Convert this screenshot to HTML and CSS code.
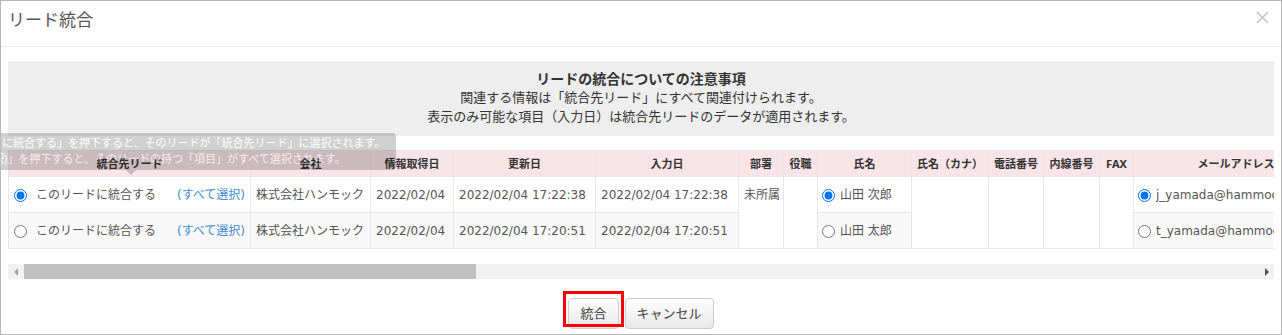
FILE: index.html
```html
<!DOCTYPE html>
<html lang="ja">
<head>
  <meta charset="UTF-8">
  <title>リード統合</title>
  <link rel="stylesheet" href="styles.css">
</head>
<body>

<div class="modal">
  <div class="modal-header">
    <div class="modal-title">リード統合</div>
    <button class="close-btn" aria-label="閉じる">
      <svg width="13" height="13" viewBox="0 0 13 13"><path d="M1 1 L12 12 M12 1 L1 12" stroke="#c4c4c4" stroke-width="1.6" fill="none"/></svg>
    </button>
  </div>

  <div class="modal-body">
    <div class="notice">
      <div class="notice-title">リードの統合についての注意事項</div>
      <div>関連する情報は「統合先リード」にすべて関連付けられます。</div>
      <div>表示のみ可能な項目（入力日）は統合先リードのデータが適用されます。</div>
    </div>

    <div class="table-scroll">
      <table class="merge-table">
        <colgroup>
          <col class="w-lead"><col class="w-company"><col class="w-date"><col class="w-datetime"><col class="w-datetime2">
          <col class="w-dept"><col class="w-post"><col class="w-name"><col class="w-kana"><col class="w-tel">
          <col class="w-ext"><col class="w-fax"><col class="w-mail">
        </colgroup>
        <thead>
          <tr>
            <th>統合先リード</th>
            <th>会社</th>
            <th>情報取得日</th>
            <th>更新日</th>
            <th>入力日</th>
            <th>部署</th>
            <th>役職</th>
            <th>氏名</th>
            <th>氏名（カナ）</th>
            <th>電話番号</th>
            <th>内線番号</th>
            <th>FAX</th>
            <th>メールアドレス</th>
          </tr>
        </thead>
        <tbody>
          <tr>
            <td><label class="lead-pick"><span class="pick"><input type="radio" name="lead" checked>このリードに統合する</span><a class="select-all">(すべて選択)</a></label></td>
            <td>株式会社ハンモック</td>
            <td>2022/02/04</td>
            <td>2022/02/04 17:22:38</td>
            <td>2022/02/04 17:22:38</td>
            <td class="merged" rowspan="2">未所属</td>
            <td class="merged" rowspan="2"></td>
            <td><label class="field-pick"><input type="radio" name="name" checked>山田 次郎</label></td>
            <td class="merged" rowspan="2"></td>
            <td class="merged" rowspan="2"></td>
            <td class="merged" rowspan="2"></td>
            <td class="merged" rowspan="2"></td>
            <td><label class="field-pick"><input type="radio" name="mail" checked>j_yamada@hammock.jp</label></td>
          </tr>
          <tr class="alt">
            <td><label class="lead-pick"><span class="pick"><input type="radio" name="lead">このリードに統合する</span><a class="select-all">(すべて選択)</a></label></td>
            <td>株式会社ハンモック</td>
            <td>2022/02/04</td>
            <td>2022/02/04 17:20:51</td>
            <td>2022/02/04 17:20:51</td>
            <td><label class="field-pick"><input type="radio" name="name">山田 太郎</label></td>
            <td><label class="field-pick"><input type="radio" name="mail">t_yamada@hammock.jp</label></td>
          </tr>
        </tbody>
      </table>
    </div>

    <div class="hscroll">
      <div class="hscroll-btn"><span class="arrow-left"></span></div>
      <div class="hscroll-track"><div class="hscroll-thumb"></div></div>
      <div class="hscroll-btn"><span class="arrow-right"></span></div>
    </div>
  </div>

  <div class="modal-footer">
    <span class="marked">
      <button class="btn">統合</button>
      <span class="mark-box"></span>
    </span>
    <button class="btn">キャンセル</button>
  </div>

  <div class="tooltip">
    <div class="tooltip-inner">
      <div>「このリードに統合する」を押下すると、そのリードが「統合先リード」に選択されます。</div>
      <div>「(すべて選択)」を押下すると、そのリードの持つ「項目」がすべて選択されます。</div>
    </div>
    <div class="tooltip-arrow"></div>
  </div>
</div>

</body>
</html>
```

FILE: styles.css
```css
html, body {
  margin: 0;
  padding: 0;
  background: #ffffff;
  color: #555555;
  font-family: "Noto Sans", "Noto Sans CJK JP", sans-serif;
}
.modal {
  position: relative;
  box-sizing: border-box;
  height: 335px;
  border: 1px solid #b8b8b8;
  overflow: hidden;
}

/* ヘッダー */
.modal-header {
  display: flex;
  justify-content: space-between;
  align-items: flex-start;
  padding: 9px 8px 16px 7px;
  border-bottom: 1px solid #ebebeb;
}
.modal-title {
  font-size: 17px;
  line-height: 20px;
  color: #555;
}
.close-btn {
  background: none;
  border: none;
  padding: 0;
  margin: 1px 4px 0 0;
  width: 13px;
  height: 13px;
  cursor: pointer;
}
.close-btn svg { display: block; }

/* 本文 */
.modal-body { padding: 14px 7px 0; }
.notice {
  background: #eeeeee;
  text-align: center;
  font-size: 13px;
  line-height: 19px;
  color: #333;
  padding: 8px 0 10px;
}
.notice-title { font-weight: bold; font-size: 14px; }

.table-scroll {
  margin-top: 14px;
  overflow: hidden;
}
.merge-table {
  table-layout: fixed;
  border-collapse: collapse;
  width: 1330px;
  font-family: "DejaVu Sans", "Noto Sans CJK JP", sans-serif;
  font-size: 12px;
}
.w-lead { width: 242px; }
.w-company { width: 120px; }
.w-date { width: 83px; }
.w-datetime { width: 142px; }
.w-datetime2 { width: 143px; }
.w-dept { width: 45px; }
.w-post { width: 34px; }
.w-name { width: 94px; }
.w-kana { width: 77px; }
.w-tel { width: 55px; }
.w-ext { width: 56px; }
.w-fax { width: 34px; }
.w-mail { width: 205px; }

.merge-table th {
  background: #f9e5e8;
  color: #333;
  font-family: "Noto Sans", "Noto Sans CJK JP", sans-serif;
  font-size: 11px;
  font-weight: bold;
  line-height: 17px;
  padding: 4px 2px;
  border: 1px solid #e6e6e6;
  white-space: nowrap;
  overflow: hidden;
}
.merge-table td {
  border: 1px solid #e6e6e6;
  padding: 8px 5px 7px 5px;
  line-height: 20px;
  vertical-align: top;
  white-space: nowrap;
  overflow: hidden;
  background: #ffffff;
}
.merge-table tr.alt td { background: #f9f9f9; }
.merge-table tr.alt td.merged,
.merge-table td.merged { background: #ffffff; }

.lead-pick {
  display: flex;
  justify-content: space-between;
  align-items: center;
}
.pick { display: flex; align-items: center; }
.lead-pick input { margin: 0 9px 0 0; }
.select-all { color: #3f8cd2; cursor: pointer; }
.field-pick { display: flex; align-items: center; }
.field-pick input { margin: 0 5px 0 -1px; }

/* 横スクロール */
.hscroll {
  display: flex;
  height: 15px;
  margin-top: 15px;
  background: #f1f1f1;
}
.hscroll-btn {
  width: 15px;
  display: flex;
  align-items: center;
  justify-content: center;
}
.arrow-left {
  border-top: 4px solid transparent;
  border-bottom: 4px solid transparent;
  border-right: 4px solid #a3a3a3;
}
.arrow-right {
  border-top: 4px solid transparent;
  border-bottom: 4px solid transparent;
  border-left: 4px solid #505050;
}
.hscroll-track { flex: 1; }
.hscroll-thumb {
  width: 452px;
  margin-left: 1px;
  height: 100%;
  background: #c1c1c1;
}

/* フッター */
.modal-footer {
  display: flex;
  justify-content: center;
  gap: 6px;
  padding-top: 19px;
}
.marked { position: relative; display: flex; }
.btn {
  font-family: "Noto Sans", "Noto Sans CJK JP", sans-serif;
  font-size: 13px;
  line-height: 17px;
  color: #444;
  padding: 6px 11px;
  border: 1px solid #cccccc;
  border-radius: 4px;
  background: linear-gradient(#ffffff, #e8e8e8);
  cursor: pointer;
}
.mark-box {
  position: absolute;
  top: -7px;
  left: -5px;
  right: -5px;
  bottom: 2px;
  border: 3px solid #ff0000;
}

/* ツールチップ（フェード中） */
.tooltip {
  position: absolute;
  top: 132px;
  left: -73px;
  opacity: 0.18;
}
.tooltip-inner {
  background: #000;
  color: #fff;
  font-size: 11px;
  line-height: 16px;
  padding: 2px 11px 3px 8px;
  border-radius: 4px;
  white-space: nowrap;
}
.tooltip-arrow {
  margin-left: 198px;
  width: 0;
  height: 0;
  border-left: 5px solid transparent;
  border-right: 5px solid transparent;
  border-top: 5px solid #000;
}
```
